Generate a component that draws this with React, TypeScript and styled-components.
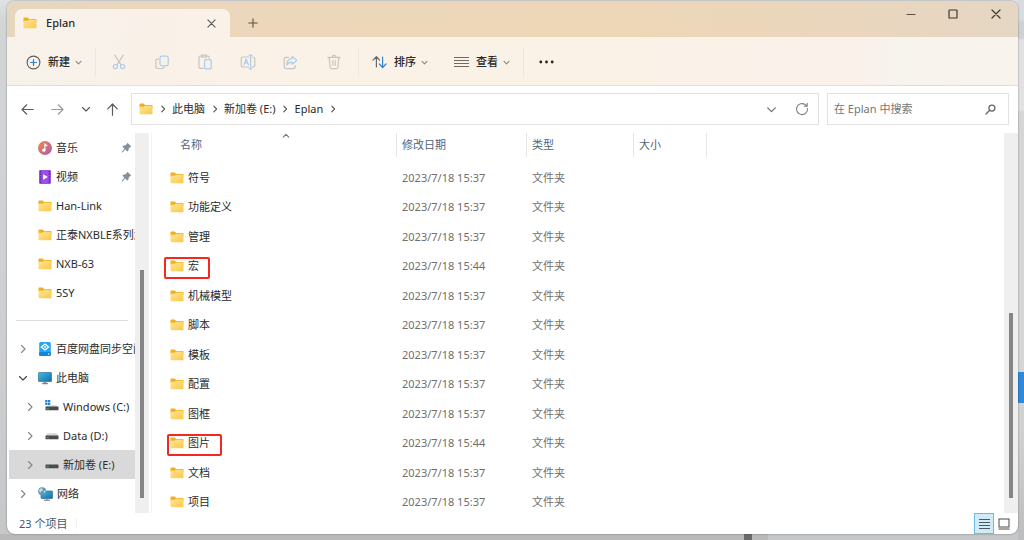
import React from 'react';
import styled, { createGlobalStyle, css } from 'styled-components';

const GlobalStyle = createGlobalStyle`
  * { box-sizing: border-box; }
  html, body { margin: 0; padding: 0; }
  body {
    font-family: "Noto Sans", "Noto Sans CJK SC", sans-serif;
    font-size: 11px;
    line-height: 16px;
    color: #2b2b2b;
  }
  button {
    font: inherit;
    color: inherit;
    background: none;
    border: 0;
    margin: 0;
    padding: 0;
  }
  svg { display: block; flex: none; }
`;

/* ---------- desktop and window frame ---------- */

const Desktop = styled.div`
  min-height: 100vh;
  display: flex;
  flex-direction: column;
  padding: 1px 6px 6px 7px;
  background:
    linear-gradient(#2f88d8, #2f88d8) right 372px / 7px 31px no-repeat,
    linear-gradient(#6a6a6a, #6a6a6a) 744px bottom / 8px 6px no-repeat,
    linear-gradient(#b9b9b9, #b9b9b9) 0 bottom / 768px 6px no-repeat,
    linear-gradient(#d9dcdf 0 20px, #cfd2d5 22px 38px, #e2e2e2 40px 110px, #d4d5d6 112px 360px, #d0d0d0 440px, #bcbdbe) right 0 / 6px 100% no-repeat,
    linear-gradient(#dfe2e5, #d3d5d6 20px, #cfd0d2 300px, #c6c7c8);
`;

const Window = styled.main`
  flex: 1;
  display: flex;
  flex-direction: column;
  overflow: hidden;
  background: #fff;
  border-radius: 8px;
  box-shadow: 0 0 2px rgba(0, 0, 0, 0.45);
`;

const TitleBar = styled.header`
  display: flex;
  align-items: flex-end;
  height: 36px;
  padding-left: 8px;
  background: linear-gradient(90deg, #e6d6c0, #ecd7bb 25%, #eed7b7 60%, #ead6bc 80%, #e5d7c4);
`;

const Tab = styled.div`
  display: flex;
  align-items: center;
  width: 215px;
  height: 28px;
  padding: 0 12px 0 8px;
  border-radius: 7px 7px 0 0;
  background: linear-gradient(90deg, #f8f2ea, #faf1e8);
  font-weight: 500;
`;

const TabLabel = styled.span`
  flex: 1;
  margin-left: 9px;
`;

const IconButton = styled.button<{ $w?: number; $h?: number }>`
  display: flex;
  align-items: center;
  justify-content: center;
  flex: none;
  width: ${(p) => p.$w ?? 14}px;
  height: ${(p) => p.$h ?? 28}px;
`;

const WindowControls = styled.div`
  display: flex;
  align-self: flex-start;
  margin-left: auto;
`;

/* ---------- command bar ---------- */

const CommandBar = styled.div`
  display: flex;
  align-items: center;
  height: 49px;
  padding: 2px 18px 0 19px;
  border-bottom: 1px solid #eddcc6;
  background: linear-gradient(90deg, #f7f2ea, #faf1e8 20%, #faf1e7 60%, #faf1ec 85%, #f7f3ed 88%, #f8f3ec);
`;

const Command = styled.button`
  display: flex;
  align-items: center;
  gap: 7px;
  height: 32px;
  color: #2a2a2a;
`;

const CommandText = styled.span`
  display: flex;
  align-items: center;
  gap: 5px;
  font-weight: 500;
`;

const Rule = styled.span<{ $before?: number; $after?: number }>`
  width: 1px;
  height: 28px;
  margin: 0 ${(p) => p.$after ?? 0}px 0 ${(p) => p.$before ?? 0}px;
  background: #efe6da;
`;

/* ---------- address row ---------- */

const AddressRow = styled.div`
  display: flex;
  align-items: center;
  height: 46px;
  padding: 0 9px 0 5px;
`;

const boxed = css`
  display: flex;
  align-items: center;
  height: 32px;
  border: 1px solid #e2e2e2;
`;

const AddressBox = styled.nav`
  ${boxed}
  flex: 1;
  min-width: 0;
  margin: 0 8px 0 5px;
  padding: 0 1px 0 7px;
`;

const Crumb = styled.button`
  white-space: nowrap;
  height: 24px;
`;

const CrumbSeparator = styled.span`
  display: flex;
  justify-content: center;
  width: 19px;
`;

const Grow = styled.span`
  flex: 1;
`;

const SearchBox = styled.label`
  ${boxed}
  width: 182px;
  padding: 0 12px 0 6px;
`;

const SearchInput = styled.input`
  flex: 1;
  min-width: 0;
  border: 0;
  outline: 0;
  padding: 0;
  background: none;
  font: inherit;
  &::placeholder { color: #757575; opacity: 1; }
`;

/* ---------- body ---------- */

const Body = styled.div`
  flex: 1 0 381px;
  display: flex;
  min-height: 0;
`;

const Sidebar = styled.nav`
  width: 128px;
  flex: none;
  overflow: hidden;
  padding: 1px 0 0 2px;
`;

const TreeItem = styled.button<{ $level?: number; $selected?: boolean }>`
  display: flex;
  align-items: center;
  width: 100%;
  height: 29px;
  overflow: hidden;
  padding-left: ${(p) => 9 + (p.$level ?? 0) * 7}px;
  text-align: left;
  background: ${(p) => (p.$selected ? '#d9d9d9' : 'transparent')};
`;

const TreeArrow = styled.span`
  display: flex;
  justify-content: center;
  flex: none;
  width: 10px;
  margin-right: 10px;
`;

const TreeLabel = styled.span`
  flex: 1;
  min-width: 0;
  overflow: hidden;
  white-space: nowrap;
  margin-left: 4px;
`;

const PinSlot = styled.span`
  margin-right: 3px;
`;

const SidebarRule = styled.hr`
  height: 1px;
  border: 0;
  margin: 13px 7px;
  background: #dcdcdc;
`;

const ScrollTrack = styled.div<{ $before: number; $thumb: number; $after: number }>`
  display: grid;
  grid-template-rows: ${(p) => `${p.$before}fr ${p.$thumb}fr ${p.$after}fr`};
  flex: none;
  width: 14px;
  margin-top: 1px;
  background: #efefef;
`;

const ScrollThumb = styled.div`
  grid-row: 2;
  justify-self: center;
  width: 4px;
  background: #858585;
`;

const FilePane = styled.section`
  flex: 1;
  min-width: 0;
  height: 381px;
  overflow: hidden;
  margin-left: 2px;
  border-left: 1px solid #f4f4f4;
`;

const FileTable = styled.table`
  width: 100%;
  table-layout: fixed;
  border-collapse: collapse;
`;

const HeadCell = styled.th<{ $w?: number }>`
  position: relative;
  width: ${(p) => (p.$w ? `${p.$w}px` : 'auto')};
  height: 31px;
  padding: 1px 0 6px;
  text-align: left;
  font-weight: 400;
  color: #52647d;
`;

const HeadLabel = styled.div<{ $pad: number }>`
  height: 24px;
  padding-left: ${(p) => p.$pad}px;
  line-height: 24px;
  border-right: 1px solid #e6e6e6;
`;

const SortMark = styled.span`
  position: absolute;
  top: 0;
  left: 53%;
`;

const Row = styled.tr`
  height: 29px;
  &:nth-child(even) { height: 30px; }
`;

const Cell = styled.td`
  padding: 0 0 0 5px;
  color: #6f6f6f;
  white-space: nowrap;
`;

const NameCell = styled(Cell)`
  position: relative;
  padding-left: 18px;
  color: #2b2b2b;
`;

const FileName = styled.div`
  display: flex;
  align-items: center;
  gap: 4px;
`;

const Mark = styled.span<{ $left: number; $w: number }>`
  position: absolute;
  top: 6px;
  left: ${(p) => p.$left}px;
  width: ${(p) => p.$w}px;
  height: 22px;
  border: 2px solid #f5281f;
  border-radius: 2px;
`;

/* ---------- status bar ---------- */

const StatusBar = styled.footer`
  display: flex;
  align-items: center;
  height: 21px;
  padding: 0 4px 0 12px;
  color: #45566e;
`;

const StatusRule = styled.span`
  width: 1px;
  height: 11px;
  margin-left: 9px;
  background: #f0f0f0;
`;

const ViewButton = styled(IconButton)<{ $on?: boolean }>`
  width: 20px;
  height: 21px;
  border: 1px solid ${(p) => (p.$on ? '#6dbbe2' : 'transparent')};
  background: ${(p) => (p.$on ? '#d0ebf8' : 'transparent')};
`;

const ViewCommand = styled(Command)`
  margin-left: 26px;
`;

/* ---------- icons ---------- */

type ChevronProps = { dir: 'right' | 'down' | 'up'; size?: number; color?: string };

const chevronPaths = { right: 'M3.5 1.5 7 5 3.5 8.5', down: 'M1.5 3.5 5 7 8.5 3.5', up: 'M1.5 6.5 5 3 8.5 6.5' };

const Chevron = ({ dir, size = 8, color = '#777' }: ChevronProps) => (
  <svg width={size} height={size} viewBox="0 0 10 10" fill="none" stroke={color} strokeWidth={11 / size} strokeLinecap="round" strokeLinejoin="round">
    <path d={chevronPaths[dir]} />
  </svg>
);

const Folder = () => (
  <svg width="14" height="14" viewBox="0 0 14 14">
    <defs>
      <linearGradient id="folderFront" x1="0" y1="0" x2="1" y2="1">
        <stop offset="0" stopColor="#ffe597" />
        <stop offset="1" stopColor="#fbc847" />
      </linearGradient>
    </defs>
    <path d="M.5 2.2q0-.7.7-.7h3.3q.4 0 .7.4l.9 1.1h6.7q.7 0 .7.7V6H.5z" fill="#efb01f" />
    <path d="M.5 4.8h4.2l1.1-1h7q.7 0 .7.7v7q0 .7-.7.7H1.2q-.7 0-.7-.7z" fill="url(#folderFront)" />
  </svg>
);

const line = { fill: 'none', strokeLinecap: 'round' as const, strokeLinejoin: 'round' as const };

const CloseIcon = ({ size = 9, color = '#555' }: { size?: number; color?: string }) => (
  <svg width={size} height={size} viewBox="0 0 10 10" {...line} stroke={color} strokeWidth="1.2">
    <path d="M1 1l8 8M9 1 1 9" />
  </svg>
);

const PlusIcon = () => (
  <svg width="10" height="10" viewBox="0 0 10 10" {...line} stroke="#5b5348" strokeWidth="1.1">
    <path d="M5 .8v8.4M.8 5h8.4" />
  </svg>
);

const NewIcon = () => (
  <svg width="15" height="15" viewBox="0 0 15 15" {...line}>
    <circle cx="7.5" cy="7.5" r="6.4" stroke="#5d5d5d" strokeWidth="1.1" />
    <path d="M7.5 4.6v5.8M4.6 7.5h5.8" stroke="#2f82cf" strokeWidth="1.2" />
  </svg>
);

const GREY = '#c9c5c0';
const BLUE = '#a9cdea';

const CutIcon = () => (
  <svg width="14" height="16" viewBox="0 0 14 16" {...line} strokeWidth="1.2">
    <path d="M2.8 1.2 9 10.8M11.2 1.2 5 10.8" stroke={GREY} />
    <circle cx="3.4" cy="12.6" r="2.1" stroke={BLUE} />
    <circle cx="10.6" cy="12.6" r="2.1" stroke={BLUE} />
  </svg>
);

const CopyIcon = () => (
  <svg width="14" height="15" viewBox="0 0 14 15" {...line} strokeWidth="1.2">
    <path d="M3.3 4.2H2.4Q.8 4.2.8 5.8v5.8q0 1.9 1.9 1.9h4.5q1.4 0 1.7-1.4" stroke={GREY} />
    <rect x="5" y="1.2" width="8.2" height="9.6" rx="1.8" stroke={BLUE} />
  </svg>
);

const PasteIcon = () => (
  <svg width="14" height="16" viewBox="0 0 14 16" {...line} strokeWidth="1.2">
    <path d="M3.6 2.2H2.2Q1 2.2 1 3.4v9.8q0 1.2 1.2 1.2h3M8.6 2.2H10q1.2 0 1.2 1.2v.6M3.8 1.2h4.6v2H3.8z" stroke={GREY} />
    <rect x="6.6" y="5.6" width="6.6" height="9.2" rx="1" stroke={BLUE} />
  </svg>
);

const RenameIcon = () => (
  <svg width="16" height="16" viewBox="0 0 16 16" {...line} strokeWidth="1.2">
    <path d="M8.6 3H3.2Q1.2 3 1.2 5v6q0 2 2 2h5.4M12.6 3q2.2 0 2.2 2v6q0 2-2.2 2" stroke={GREY} />
    <path d="M4 10.6 6.2 5l2.2 5.6M4.8 8.8h2.8M10.6 1.4v13.2M9.2 1.2h2.8M9.2 14.8h2.8" stroke={BLUE} />
  </svg>
);

const ShareIcon = () => (
  <svg width="15" height="15" viewBox="0 0 15 15" {...line} strokeWidth="1.2">
    <path d="M5.4 2.4H3.2Q1.2 2.4 1.2 4.4v7.2q0 2 2 2h7q2 0 2-2v-1" stroke={GREY} />
    <path d="M9.2 1.4 13.8 5.4 9.2 9.2V7.2Q5.8 7 3.8 10q.2-6 5.4-6.6z" stroke={BLUE} />
  </svg>
);

const TrashIcon = () => (
  <svg width="14" height="16" viewBox="0 0 14 16" {...line} strokeWidth="1.2" stroke={GREY}>
    <path d="M1 3.4h12M5.2 3.2q0-1.8 1.8-1.8t1.8 1.8M2.2 3.6l.9 9.6q.1 1.4 1.5 1.4h4.8q1.4 0 1.5-1.4l.9-9.6M5.8 6.6v4.6M8.2 6.6v4.6" />
  </svg>
);

const SortIcon = () => (
  <svg width="15" height="14" viewBox="0 0 15 14" {...line} strokeWidth="1.2">
    <path d="M4.4 12V1.8M1 5.2l3.4-3.6 3.2 3.6" stroke="#666" />
    <path d="M10.6 2v10.4M7.4 9l3.2 3.6L14 9" stroke="#2f82cf" />
  </svg>
);

const ViewIcon = () => (
  <svg width="15" height="11" viewBox="0 0 15 11" stroke="#6e6a66" strokeWidth="1">
    <path d="M0 .5h15M0 3.5h15M0 6.5h15M0 9.5h15" />
  </svg>
);

const MoreIcon = () => (
  <svg width="15" height="4" viewBox="0 0 15 4" fill="#222">
    <circle cx="1.8" cy="2" r="1.4" />
    <circle cx="7.5" cy="2" r="1.4" />
    <circle cx="13.2" cy="2" r="1.4" />
  </svg>
);

const Arrow = ({ kind }: { kind: 'left' | 'right' | 'up' }) => (
  <svg width="13" height="13" viewBox="0 0 13 13" {...line} strokeWidth="1.2" stroke={kind === 'right' ? '#9a9a9a' : '#5c5c5c'}>
    <path
      d={
        kind === 'left'
          ? 'M12.2 6.5H1M5.8 1.8 1 6.5l4.8 4.7'
          : kind === 'right'
            ? 'M.8 6.5H12M7.2 1.8 12 6.5l-4.8 4.7'
            : 'M6.5 12.2V1M1.8 5.8 6.5 1l4.7 4.8'
      }
    />
  </svg>
);

const RefreshIcon = () => (
  <svg width="14" height="14" viewBox="0 0 14 14" {...line} strokeWidth="1.1" stroke="#808080">
    <path d="M12.4 6.2A5.5 5.5 0 1 1 10.4 2.8L12 4M12.2 1.2V4.2H9.2" />
  </svg>
);

const SearchIcon = () => (
  <svg width="11" height="11" viewBox="0 0 11 11" {...line} strokeWidth="1.3" stroke="#666">
    <circle cx="6.9" cy="4.1" r="3" />
    <path d="M4.7 6.3 1 10" />
  </svg>
);

const MusicIcon = () => (
  <svg width="14" height="14" viewBox="0 0 14 14">
    <defs>
      <linearGradient id="music" x1="0" y1="0" x2="1" y2="1">
        <stop offset="0" stopColor="#ee8a4a" />
        <stop offset="1" stopColor="#a95bb0" />
      </linearGradient>
    </defs>
    <circle cx="7" cy="7" r="7" fill="url(#music)" />
    <circle cx="5.8" cy="9.2" r="1.6" fill="#fff" />
    <path d="M6.9 9.2V3.2l2.4 1.7" fill="none" stroke="#fff" strokeWidth="1.2" />
  </svg>
);

const VideoIcon = () => (
  <svg width="14" height="14" viewBox="0 0 14 14">
    <rect x="1" y="0" width="12" height="14" rx="1.4" fill="#9a4fe6" />
    <path d="M2.7 1v12M11.3 1v12" stroke="#55249c" strokeWidth="1.3" strokeDasharray="1.4 1.2" />
    <path d="M5.2 4.2 9.8 7l-4.6 2.8z" fill="#fff" />
  </svg>
);

const PinIcon = () => (
  <svg width="11" height="11" viewBox="0 0 12 12">
    <path d="M7 .8 11.2 5l-1.3.7-1.5 1.5-.4 2.5-1.2.7L4.7 8.3 1.2 11.6l-.6-.6L3.8 7.4 1.6 5.2l.8-1.1 2.4-.5L6.4 2.1z" fill="#84919a" />
  </svg>
);

const CloudDiskIcon = () => (
  <svg width="14" height="14" viewBox="0 0 14 14">
    <rect x="1.2" y="0" width="11.6" height="14" rx="1.6" fill="#27a5f5" />
    <rect x="1.2" y="10" width="11.6" height="4" rx="1.2" fill="#1285dc" />
    <path d="M7 2 10.6 5 7 8 3.4 5z" fill="none" stroke="#fff" strokeWidth="1.3" />
    <circle cx="7" cy="5" r=".9" fill="#fff" />
    <circle cx="10.6" cy="12" r=".7" fill="#fff" />
  </svg>
);

const ScreenDefs = () => (
  <defs>
    <linearGradient id="screen" x1="0" y1="0" x2="1" y2="1">
      <stop offset="0" stopColor="#35c3dc" />
      <stop offset="1" stopColor="#1b67ae" />
    </linearGradient>
  </defs>
);

const ComputerIcon = () => (
  <svg width="14" height="14" viewBox="0 0 14 14">
    <ScreenDefs />
    <rect x=".5" y="1.5" width="13" height="9" rx=".6" fill="url(#screen)" stroke="#235f86" strokeWidth=".6" />
    <path d="M5.5 10.8h3v1.7h-3z" fill="#8b979f" />
    <path d="M4 12.7h6" stroke="#66747d" strokeWidth="1" />
  </svg>
);

const NetworkIcon = () => (
  <svg width="15" height="14" viewBox="0 0 15 14">
    <ScreenDefs />
    <rect x="3" y="4" width="11.5" height="7.5" rx=".6" fill="url(#screen)" stroke="#235f86" strokeWidth=".6" />
    <path d="M6 13.2h6M9 11.6v1.4" stroke="#66747d" strokeWidth="1" />
    <circle cx="4.2" cy="4.2" r="4" fill="#5e97bb" />
    <path d="M1.2 2.6q2.4-2.4 3.4-.6t-1 2.2-.2 2.200q-2.400-.6-2.200-3.800zM6 3.400l1.800.4-.8 2.200-1.200-.8z" fill="#c5dfe9" />
  </svg>
);

const DriveIcon = ({ system, flat }: { system?: boolean; flat?: boolean }) => (
  <svg width="14" height="14" viewBox="0 0 14 14">
    {system && <path d="M.2 0h2.3v2.3H.2zM3 0h2.3v2.3H3zM.2 2.8h2.3v2.3H.2zM3 2.8h2.3v2.3H3z" fill="#1c87d6" />}
    {!flat && <path d="M2.6 4.2h8.800L13.500 7H.5z" fill="#d6d6d6" transform={system ? 'translate(0 1)' : undefined} />}
    <rect x=".5" y="6.5" width="13" height="3.8" rx=".6" fill="#4b4b4b" />
    <path d="M1.6 8.700h2.200" stroke="#4fb35d" strokeWidth="1" />
  </svg>
);

const ListViewIcon = () => (
  <svg width="11" height="11" viewBox="0 0 11 11" stroke="#4c585e" strokeWidth="1">
    <path d="M0 1.5h11M0 4.5h11M0 7.5h11M0 10.5h11" />
  </svg>
);

const TileViewIcon = () => (
  <svg width="12" height="12" viewBox="0 0 12 12" fill="none" stroke="#4a4a4a">
    <rect x="1" y="1" width="10" height="8" />
    <path d="M.5 11h11" />
  </svg>
);

/* ---------- data ---------- */

type TreeNode = {
  label: string;
  icon: React.ReactNode;
  arrow?: 'right' | 'down';
  level?: number;
  pinned?: boolean;
  selected?: boolean;
};

const quickAccess: TreeNode[] = [
  { label: '音乐', icon: <MusicIcon />, pinned: true },
  { label: '视频', icon: <VideoIcon />, pinned: true },
  { label: 'Han-Link', icon: <Folder /> },
  { label: '正泰NXBLE系列漏', icon: <Folder /> },
  { label: 'NXB-63', icon: <Folder /> },
  { label: '5SY', icon: <Folder /> },
];

const places: TreeNode[] = [
  { label: '百度网盘同步空间', icon: <CloudDiskIcon />, arrow: 'right' },
  { label: '此电脑', icon: <ComputerIcon />, arrow: 'down' },
  { label: 'Windows (C:)', icon: <DriveIcon system />, arrow: 'right', level: 1 },
  { label: 'Data (D:)', icon: <DriveIcon />, arrow: 'right', level: 1 },
  { label: '新加卷 (E:)', icon: <DriveIcon flat />, arrow: 'right', level: 1, selected: true },
  { label: '网络', icon: <NetworkIcon />, arrow: 'right' },
];

type FileEntry = { name: string; time?: string; mark?: { left: number; width: number } };

const files: FileEntry[] = [
  { name: '符号' },
  { name: '功能定义' },
  { name: '管理' },
  { name: '宏', time: '15:44', mark: { left: 12, width: 46 } },
  { name: '机械模型' },
  { name: '脚本' },
  { name: '模板' },
  { name: '配置' },
  { name: '图框' },
  { name: '图片', time: '15:44', mark: { left: 15, width: 55 } },
  { name: '文档' },
  { name: '项目' },
];

const commands = [
  { label: '剪切', icon: <CutIcon /> },
  { label: '复制', icon: <CopyIcon /> },
  { label: '粘贴', icon: <PasteIcon /> },
  { label: '重命名', icon: <RenameIcon /> },
  { label: '共享', icon: <ShareIcon /> },
  { label: '删除', icon: <TrashIcon /> },
];

/* ---------- parts ---------- */

const Tree = ({ nodes }: { nodes: TreeNode[] }) => (
  <>
    {nodes.map((n) => (
      <TreeItem key={n.label} $level={n.level} $selected={n.selected}>
        <TreeArrow>{n.arrow && <Chevron dir={n.arrow} size={10} color={n.arrow === 'down' ? '#444' : '#858585'} />}</TreeArrow>
        {n.icon}
        <TreeLabel>{n.label}</TreeLabel>
        {n.pinned && <PinSlot><PinIcon /></PinSlot>}
      </TreeItem>
    ))}
  </>
);

const Breadcrumbs = () => (
  <>
    <Folder />
    {['此电脑', '新加卷 (E:)', 'Eplan'].map((c) => (
      <React.Fragment key={c}>
        <CrumbSeparator><Chevron dir="right" color="#555" /></CrumbSeparator>
        <Crumb>{c}</Crumb>
      </React.Fragment>
    ))}
    <CrumbSeparator><Chevron dir="right" color="#555" /></CrumbSeparator>
  </>
);

const CommandLabel = ({ children }: { children: React.ReactNode }) => (
  <CommandText>
    {children}
    <Chevron dir="down" size={7} color="#8d8880" />
  </CommandText>
);

export default function App() {
  return (
    <Desktop>
      <GlobalStyle />
      <Window>
        <TitleBar>
          <Tab>
            <Folder />
            <TabLabel>Eplan</TabLabel>
            <IconButton aria-label="关闭标签页"><CloseIcon /></IconButton>
          </Tab>
          <IconButton $w={46} aria-label="新标签页"><PlusIcon /></IconButton>
          <WindowControls>
            <IconButton $w={42} $h={26} aria-label="最小化">
              <svg width="10" height="10" viewBox="0 0 10 10" stroke="#5b5348"><path d="M.5 5.5h9" /></svg>
            </IconButton>
            <IconButton $w={42} $h={26} aria-label="最大化">
              <svg width="10" height="10" viewBox="0 0 10 10" fill="none" stroke="#3d3933" strokeWidth="1.2"><rect x="1" y="1" width="8" height="8" rx=".6" /></svg>
            </IconButton>
            <IconButton $w={44} $h={26} aria-label="关闭"><CloseIcon size={10} color="#3d3933" /></IconButton>
          </WindowControls>
        </TitleBar>

        <CommandBar>
          <Command>
            <NewIcon />
            <CommandLabel>新建</CommandLabel>
          </Command>
          <Rule $before={13} $after={1} />
          {commands.map((c) => (
            <IconButton key={c.label} $w={43} aria-label={c.label}>{c.icon}</IconButton>
          ))}
          <Rule $before={3} $after={13} />
          <Command>
            <SortIcon />
            <CommandLabel>排序</CommandLabel>
          </Command>
          <ViewCommand>
            <ViewIcon />
            <CommandLabel>查看</CommandLabel>
          </ViewCommand>
          <Rule $before={13} />
          <IconButton $w={44} aria-label="更多"><MoreIcon /></IconButton>
        </CommandBar>

        <AddressRow>
          <IconButton $w={30} aria-label="后退"><Arrow kind="left" /></IconButton>
          <IconButton $w={30} aria-label="前进"><Arrow kind="right" /></IconButton>
          <IconButton $w={27} aria-label="最近位置"><Chevron dir="down" size={10} color="#555" /></IconButton>
          <IconButton $w={27} aria-label="向上"><Arrow kind="up" /></IconButton>
          <AddressBox aria-label="地址">
            <Breadcrumbs />
            <Grow />
            <IconButton $w={32} aria-label="历史地址"><Chevron dir="down" size={11} color="#666" /></IconButton>
            <IconButton $w={30} aria-label="刷新"><RefreshIcon /></IconButton>
          </AddressBox>
          <SearchBox>
            <SearchInput type="text" placeholder="在 Eplan 中搜索" aria-label="搜索" />
            <SearchIcon />
          </SearchBox>
        </AddressRow>

        <Body>
          <Sidebar aria-label="导航">
            <Tree nodes={quickAccess} />
            <SidebarRule />
            <Tree nodes={places} />
          </Sidebar>
          <ScrollTrack $before={137} $thumb={228} $after={15}><ScrollThumb /></ScrollTrack>
          <FilePane>
            <FileTable>
              <thead>
                <tr>
                  <HeadCell $w={245}>
                    <HeadLabel $pad={28}>名称</HeadLabel>
                    <SortMark><Chevron dir="up" /></SortMark>
                  </HeadCell>
                  <HeadCell $w={130}><HeadLabel $pad={5}>修改日期</HeadLabel></HeadCell>
                  <HeadCell $w={107}><HeadLabel $pad={5}>类型</HeadLabel></HeadCell>
                  <HeadCell $w={73}><HeadLabel $pad={5}>大小</HeadLabel></HeadCell>
                  <HeadCell />
                </tr>
              </thead>
              <tbody>
                {files.map((f) => (
                  <Row key={f.name}>
                    <NameCell>
                      <FileName><Folder />{f.name}</FileName>
                      {f.mark && <Mark $left={f.mark.left} $w={f.mark.width} />}
                    </NameCell>
                    <Cell>2023/7/18 {f.time ?? '15:37'}</Cell>
                    <Cell>文件夹</Cell>
                    <Cell />
                    <Cell />
                  </Row>
                ))}
              </tbody>
            </FileTable>
          </FilePane>
          <ScrollTrack $before={180} $thumb={185} $after={15}><ScrollThumb /></ScrollTrack>
        </Body>

        <StatusBar>
          23 个项目
          <StatusRule />
          <Grow />
          <ViewButton $on aria-label="详细信息"><ListViewIcon /></ViewButton>
          <ViewButton aria-label="大图标"><TileViewIcon /></ViewButton>
        </StatusBar>
      </Window>
    </Desktop>
  );
}
